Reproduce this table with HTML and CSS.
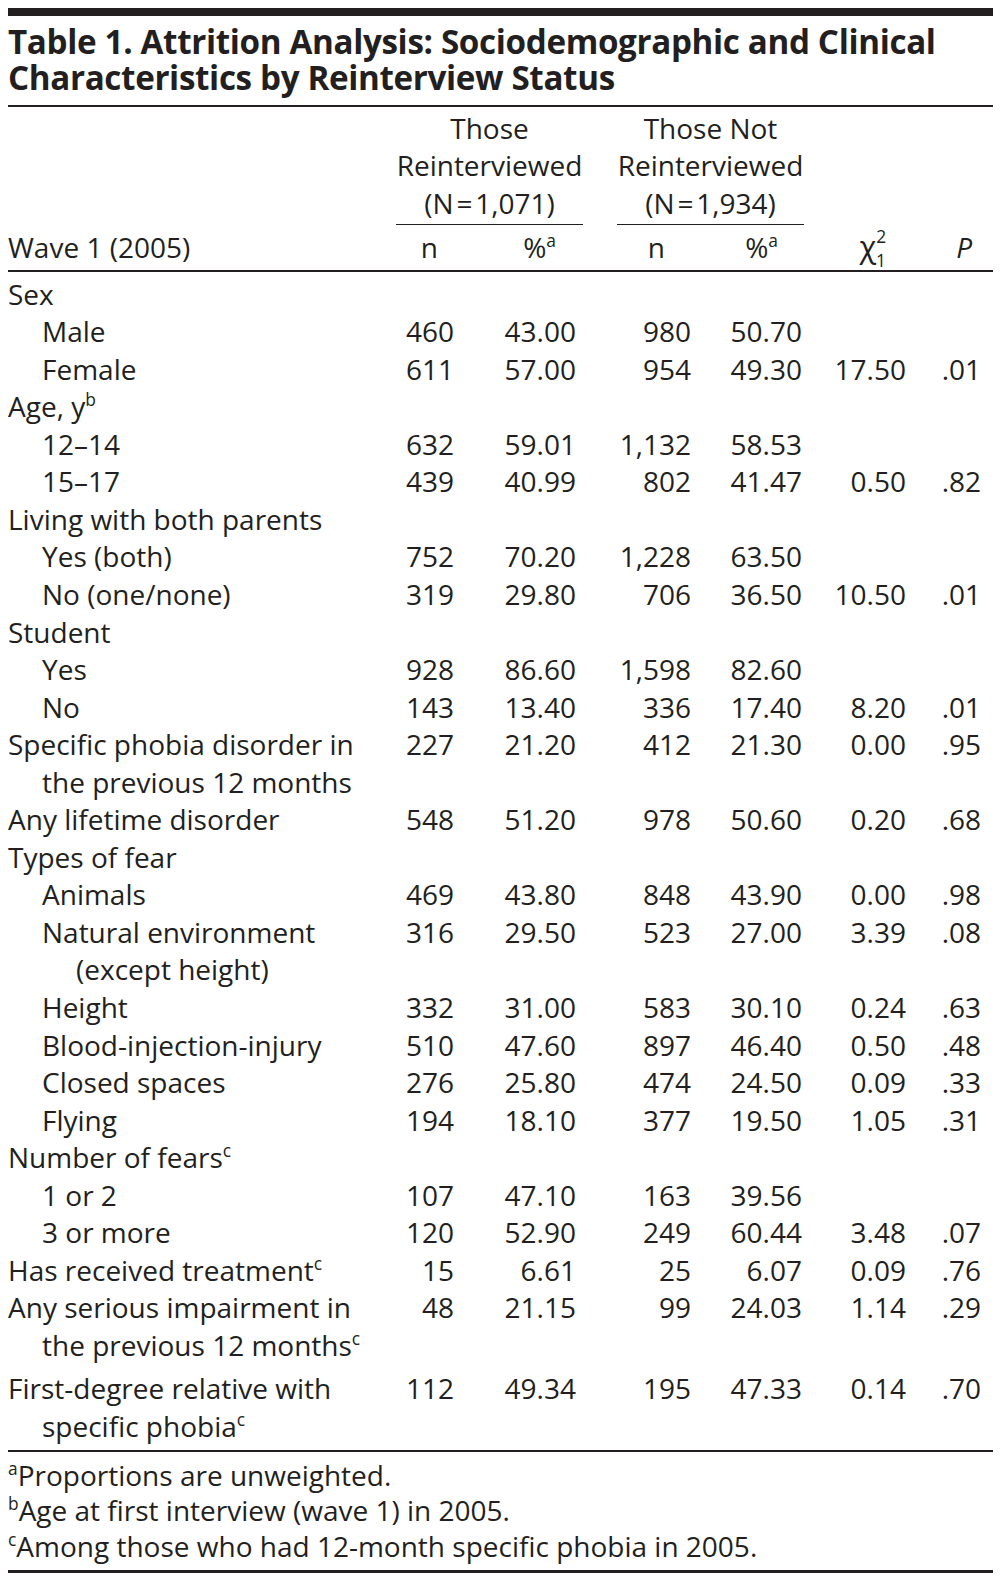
FILE: index.html
```html
<!DOCTYPE html>
<html lang="en">
<head>
<meta charset="utf-8">
<title>Table 1. Attrition Analysis</title>
<link rel="stylesheet" href="styles.css">
</head>
<body>
<div class="page">
  <div class="topbar"></div>
  <h1 class="title"><span class="tline">Table 1. Attrition Analysis: Sociodemographic and Clinical</span><span class="tline">Characteristics by Reinterview Status</span></h1>

  <div class="thead">
    <div class="spanrow">
      <div></div>
      <div class="spanner">Those<br>Reinterviewed<br>(N&#8202;=&#8202;1,071)</div>
      <div></div>
      <div class="spanner">Those Not<br>Reinterviewed<br>(N&#8202;=&#8202;1,934)</div>
      <div></div>
      <div></div>
    </div>
    <div class="row colhead">
      <div class="lab">Wave 1 (2005)</div>
      <div class="hn1">n</div>
      <div class="hp1">%<sup>a</sup></div>
      <div class="hn2">n</div>
      <div class="hp2">%<sup>a</sup></div>
      <div class="hchi"><span class="chi">χ</span><sup class="s2">2</sup><sub class="s1">1</sub></div>
      <div class="hp"><i>P</i></div>
    </div>
  </div>

  <div class="tbody">
    <div class="row"><div class="lab">Sex</div></div>
    <div class="row"><div class="lab ind">Male</div><div>460</div><div>43.00</div><div>980</div><div>50.70</div><div></div><div></div></div>
    <div class="row"><div class="lab ind">Female</div><div>611</div><div>57.00</div><div>954</div><div>49.30</div><div>17.50</div><div>.01</div></div>
    <div class="row"><div class="lab">Age, y<sup>b</sup></div></div>
    <div class="row"><div class="lab ind">12–14</div><div>632</div><div>59.01</div><div>1,132</div><div>58.53</div><div></div><div></div></div>
    <div class="row"><div class="lab ind">15–17</div><div>439</div><div>40.99</div><div>802</div><div>41.47</div><div>0.50</div><div>.82</div></div>
    <div class="row"><div class="lab">Living with both parents</div></div>
    <div class="row"><div class="lab ind">Yes (both)</div><div>752</div><div>70.20</div><div>1,228</div><div>63.50</div><div></div><div></div></div>
    <div class="row"><div class="lab ind">No (one/none)</div><div>319</div><div>29.80</div><div>706</div><div>36.50</div><div>10.50</div><div>.01</div></div>
    <div class="row"><div class="lab">Student</div></div>
    <div class="row"><div class="lab ind">Yes</div><div>928</div><div>86.60</div><div>1,598</div><div>82.60</div><div></div><div></div></div>
    <div class="row"><div class="lab ind">No</div><div>143</div><div>13.40</div><div>336</div><div>17.40</div><div>8.20</div><div>.01</div></div>
    <div class="row"><div class="lab hang">Specific phobia disorder in<br>the previous 12 months</div><div>227</div><div>21.20</div><div>412</div><div>21.30</div><div>0.00</div><div>.95</div></div>
    <div class="row"><div class="lab">Any lifetime disorder</div><div>548</div><div>51.20</div><div>978</div><div>50.60</div><div>0.20</div><div>.68</div></div>
    <div class="row"><div class="lab">Types of fear</div></div>
    <div class="row"><div class="lab ind">Animals</div><div>469</div><div>43.80</div><div>848</div><div>43.90</div><div>0.00</div><div>.98</div></div>
    <div class="row"><div class="lab ind hang2">Natural environment<br>(except height)</div><div>316</div><div>29.50</div><div>523</div><div>27.00</div><div>3.39</div><div>.08</div></div>
    <div class="row"><div class="lab ind">Height</div><div>332</div><div>31.00</div><div>583</div><div>30.10</div><div>0.24</div><div>.63</div></div>
    <div class="row"><div class="lab ind">Blood-injection-injury</div><div>510</div><div>47.60</div><div>897</div><div>46.40</div><div>0.50</div><div>.48</div></div>
    <div class="row"><div class="lab ind">Closed spaces</div><div>276</div><div>25.80</div><div>474</div><div>24.50</div><div>0.09</div><div>.33</div></div>
    <div class="row"><div class="lab ind">Flying</div><div>194</div><div>18.10</div><div>377</div><div>19.50</div><div>1.05</div><div>.31</div></div>
    <div class="row"><div class="lab">Number of fears<sup>c</sup></div></div>
    <div class="row"><div class="lab ind">1 or 2</div><div>107</div><div>47.10</div><div>163</div><div>39.56</div><div></div><div></div></div>
    <div class="row"><div class="lab ind">3 or more</div><div>120</div><div>52.90</div><div>249</div><div>60.44</div><div>3.48</div><div>.07</div></div>
    <div class="row"><div class="lab">Has received treatment<sup>c</sup></div><div>15</div><div>6.61</div><div>25</div><div>6.07</div><div>0.09</div><div>.76</div></div>
    <div class="row"><div class="lab hang">Any serious impairment in<br>the previous 12 months<sup>c</sup></div><div>48</div><div>21.15</div><div>99</div><div>24.03</div><div>1.14</div><div>.29</div></div>
    <div class="row last"><div class="lab hang">First-degree relative with<br>specific phobia<sup>c</sup></div><div>112</div><div>49.34</div><div>195</div><div>47.33</div><div>0.14</div><div>.70</div></div>
  </div>

  <div class="notes">
    <p><sup>a</sup>Proportions are unweighted.</p>
    <p><sup>b</sup>Age at first interview (wave 1) in 2005.</p>
    <p><sup>c</sup>Among those who had 12-month specific phobia in 2005.</p>
  </div>
  <div class="endrule"></div>
</div>
</body>
</html>
```

FILE: styles.css
```css
html, body {
  margin: 0;
  padding: 0;
  background: #ffffff;
}

body {
  margin: 8px;
  color: #231f20;
  font-family: "Open Sans", "Noto Sans", "Liberation Sans", sans-serif;
  font-size: 28px;
}

.page {
  width: 985px;
}

.topbar {
  height: 8px;
  background: #231f20;
}

.title {
  margin: 8px 0 0;
  padding-bottom: 8px;
  border-bottom: 2px solid #231f20;
  font-size: 33.2px;
  font-weight: 700;
  line-height: 36.3px;
  letter-spacing: -0.35px;
}

.tline {
  display: block;
  height: 36.3px;
  white-space: nowrap;
}

sup {
  font-size: 62%;
  line-height: 0;
  vertical-align: 0.62em;
}

/* header */
.thead {
  border-bottom: 2px solid #231f20;
}

.spanrow {
  display: grid;
  grid-template-columns: 388px 187px 34px 187px 102px 87px;
  padding-top: 3px;
}

.spanner {
  text-align: center;
  line-height: 37.5px;
  padding-bottom: 2px;
  border-bottom: 1.5px solid #231f20;
}

.row {
  display: grid;
  grid-template-columns: 388px 58px 122px 115px 111px 104px 87px;
  line-height: 37.55px;
}

.row > div {
  text-align: right;
  white-space: nowrap;
}

.row > div:last-child {
  padding-right: 12px;
}

.row > .lab {
  text-align: left;
  padding-right: 0;
}

.colhead {
  padding-top: 4px;
  padding-bottom: 3px;
  line-height: 37.5px;
  height: 37.5px;
}

.colhead > div.hn1 { padding-right: 16px; }
.colhead > div.hp1 { padding-right: 20px; }
.colhead > div.hn2 { padding-right: 26px; }
.colhead > div.hp2 { padding-right: 24px; }
.colhead > div.hchi { padding-right: 20px; }
.colhead > div.hp { padding-right: 21px; }

.chi {
  font-size: 1.1em;
  line-height: 0;
}

.hchi .s2 {
  vertical-align: 0.86em;
}

.s1 {
  font-size: 62%;
  line-height: 0;
  vertical-align: -0.52em;
  margin-left: -0.58em;
}

/* body */
.tbody {
  padding-top: 4px;
  padding-bottom: 4px;
  border-bottom: 2px solid #231f20;
}

.lab.ind {
  padding-left: 34px;
}

.lab.hang {
  padding-left: 34px;
  text-indent: -34px;
}

.lab.ind.hang2 {
  padding-left: 68px;
  text-indent: -34px;
}

.row.last {
  margin-top: 6px;
}

/* notes */
.notes {
  padding-top: 6px;
  padding-bottom: 6px;
}

.notes p {
  margin: 0;
  line-height: 35.5px;
  white-space: nowrap;
}

.endrule {
  height: 2.5px;
  background: #231f20;
}
```
